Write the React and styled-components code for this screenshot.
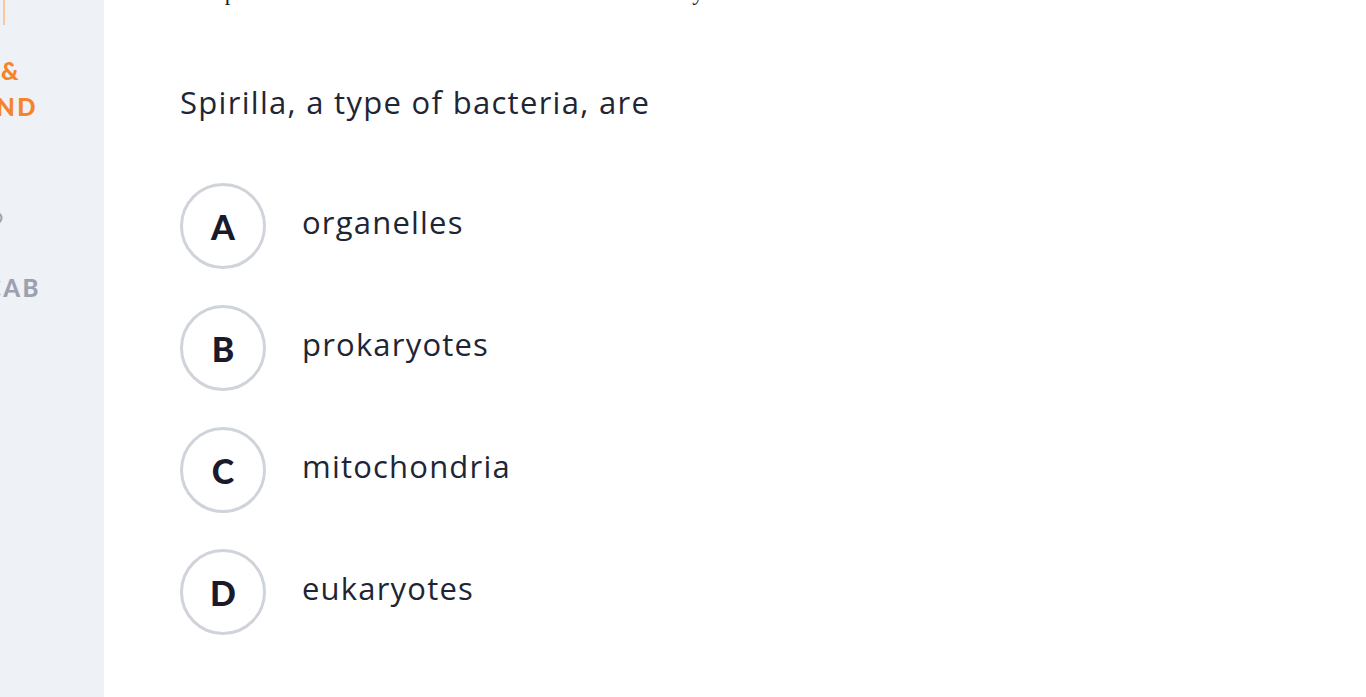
import React from 'react';
import styled, { createGlobalStyle } from 'styled-components';

const GlobalStyle = createGlobalStyle`
  html, body {
    margin: 0;
    padding: 0;
    height: 100%;
    overflow: hidden;
    background: #fff;
  }
  #root {
    height: 100%;
  }
`;

const Page = styled.div`
  display: flex;
  height: 697px;
  font-family: "Open Sans", Lato, sans-serif;
`;

const Sidebar = styled.nav`
  width: 104px;
  flex-shrink: 0;
  background: #eef1f5;
  overflow: hidden;
`;

const SideInner = styled.div`
  margin-left: -200px;
  width: 300px;
`;

const ActiveBox = styled.div`
  height: 25px;
  width: 203px;
  border-right: 2px solid #f8c9a0;
`;

const NavItem = styled.div`
  font-family: Lato, sans-serif;
  font-weight: 900;
  font-size: 24px;
  letter-spacing: 2.5px;
  line-height: 36px;
  text-transform: uppercase;
  white-space: nowrap;
  color: ${p => (p.active ? '#f5832a' : '#9ba1ae')};
  text-align: right;
  width: ${p => 200 + p.end}px;
  margin-top: ${p => p.top || 0}px;
`;

const NavIcon = styled.div`
  width: 203px;
  height: 14px;
  margin-top: ${p => p.top}px;
  display: flex;
  justify-content: flex-end;
  color: #9ba1ae;
`;

const Main = styled.main`
  flex: 1;
  padding-left: 76px;
  overflow: hidden;
`;

const Passage = styled.p`
  font-family: "Liberation Serif", serif;
  font-size: 23px;
  color: #1b1f2a;
  margin: -20px 0 0 0;
  line-height: 26px;
  white-space: nowrap;
`;

const Question = styled.h2`
  font-weight: 400;
  font-size: 31px;
  letter-spacing: 1.3px;
  color: #1e2636;
  margin: 76px 0 0 0;
  line-height: 40px;
`;

const Options = styled.ul`
  list-style: none;
  margin: 61px 0 0 0;
  padding: 0;
  display: flex;
  flex-direction: column;
  gap: 36px;
`;

const Option = styled.li`
  display: flex;
  align-items: center;
  gap: 36px;
`;

const Bubble = styled.span`
  width: 80px;
  height: 80px;
  border-radius: 50%;
  border: 3px solid #cfd3da;
  display: flex;
  align-items: center;
  justify-content: center;
  font-family: Lato, sans-serif;
  font-weight: 900;
  font-size: 34px;
  color: #191a2b;
  box-sizing: content-box;
`;

const OptionText = styled.span`
  font-size: 31px;
  letter-spacing: 1.2px;
  color: #1e2636;
  margin-top: -9px;
`;

const options = [
  ['A', 'organelles'],
  ['B', 'prokaryotes'],
  ['C', 'mitochondria'],
  ['D', 'eukaryotes'],
];

export default function App() {
  return (
    <Page>
      <GlobalStyle />
      <Sidebar>
        <SideInner>
          <ActiveBox />
          <NavItem active top={28} end={21}>Reading &amp;</NavItem>
          <NavItem active end={38}>Understand</NavItem>
          <NavIcon top={86}>
            <svg width="14" height="14" viewBox="0 0 14 14">
              <circle cx="7" cy="7" r="5.5" fill="none" stroke="currentColor" strokeWidth="2" />
            </svg>
          </NavIcon>
          <NavItem top={45} end={41}>Vocab</NavItem>
        </SideInner>
      </Sidebar>
      <Main>
        <Passage>Compare the choices to the text above. Each one is a key idea from the unit.</Passage>
        <Question>Spirilla, a type of bacteria, are</Question>
        <Options>
          {options.map(([letter, text]) => (
            <Option key={letter}>
              <Bubble>{letter}</Bubble>
              <OptionText>{text}</OptionText>
            </Option>
          ))}
        </Options>
      </Main>
    </Page>
  );
}
